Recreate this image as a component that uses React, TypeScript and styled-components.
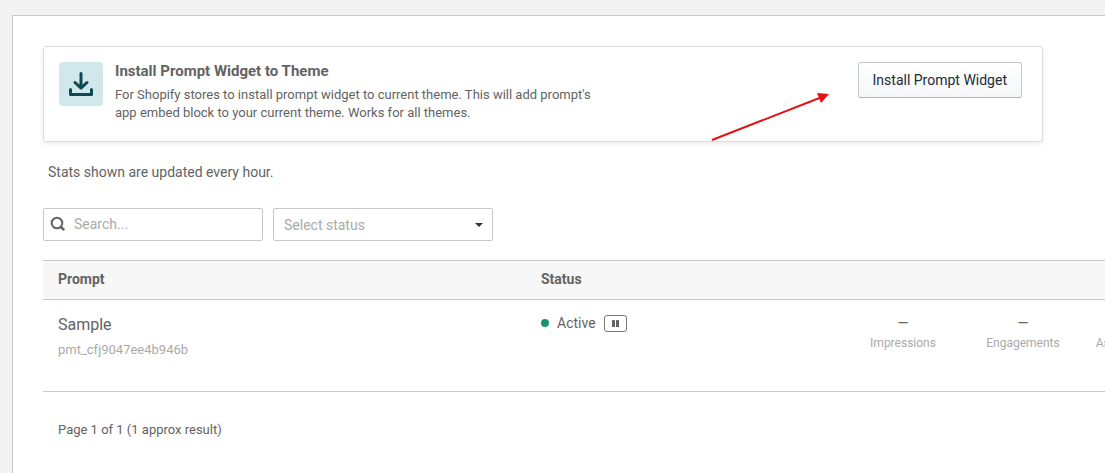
import React from "react";
import styled, { createGlobalStyle } from "styled-components";

const GlobalStyle = createGlobalStyle`
  *, *::before, *::after { box-sizing: border-box; }
  body {
    margin: 0;
    background: #f3f3f3;
    color: #636363;
    font: 14px/20px Roboto, "Liberation Sans", sans-serif;
  }
  input, select, button { font: inherit; }
`;

const Page = styled.div`
  padding: 15px 0 0 12px;
  min-height: 100vh;
  display: flex;
  overflow: hidden;
`;

const Panel = styled.main`
  flex: 1;
  min-width: 0;
  padding: 30px 0 30px 30px;
  background: #fff;
  border: solid #c8c8c8;
  border-width: 1px 0 0 1px;
`;

const InstallCard = styled.section`
  position: relative;
  display: flex;
  align-items: flex-start;
  gap: 12px;
  max-width: 1000px;
  min-height: 96px;
  padding: 15px 20px 15px 15px;
  border: 1px solid #dcdcdc;
  border-radius: 3px;
  box-shadow: 0 2px 5px rgba(0, 0, 0, 0.08);
`;

const IconTile = styled.div`
  flex: none;
  width: 44px;
  height: 44px;
  border-radius: 4px;
  background: #d0e7eb;
  svg { display: block; }
`;

const CardText = styled.div`
  flex: 1;
  min-width: 0;
`;

const CardTitle = styled.h2`
  margin: 0 0 6px;
  font-size: 15px;
  line-height: 18px;
  font-weight: 700;
`;

const CardDescription = styled.p`
  margin: 0;
  max-width: 480px;
  font-size: 13px;
  line-height: 18px;
`;

const InstallButton = styled.button`
  flex: none;
  height: 36px;
  padding: 0 14px;
  border: 1px solid #c4c8cc;
  border-bottom-color: #aeb4b9;
  border-radius: 3px;
  background: linear-gradient(to bottom, #fff, #f5f7f9);
  color: #212b36;
  white-space: nowrap;
  cursor: pointer;
`;

const Pointer = styled.svg`
  position: absolute;
  top: 45px;
  right: 212px;
  pointer-events: none;
`;

const Note = styled.p`
  margin: 20px 0 26px 5px;
`;

const Filters = styled.form`
  display: flex;
  gap: 10px;
  margin-bottom: 19px;
`;

const Field = styled.label`
  position: relative;
  display: block;
  width: 220px;
`;

const SearchInput = styled.input`
  display: block;
  width: 100%;
  height: 33px;
  padding: 0 10px 2px 30px;
  border: 1px solid #c8c8c8;
  border-radius: 2px;
  background: #fff;
  color: #636363;
  &::placeholder { color: #aaa; opacity: 1; }
`;

const StatusSelect = styled.select`
  display: block;
  width: 100%;
  height: 33px;
  padding: 0 30px 0 10px;
  border: 1px solid #c8c8c8;
  border-radius: 2px;
  background: #fff;
  color: #aaa;
  appearance: none;
`;

const SearchIcon = styled.svg`
  position: absolute;
  left: 7px;
  top: 8px;
`;

const Caret = styled.svg`
  position: absolute;
  right: 10px;
  top: 15px;
  pointer-events: none;
`;

const TableArea = styled.div`
  overflow: hidden;
`;

const Table = styled.table`
  width: 100%;
  min-width: 1160px;
  table-layout: fixed;
  border-collapse: separate;
  border-spacing: 0;
`;

const HeadCell = styled.th<{ $width?: number }>`
  width: ${(p) => (p.$width ? `${p.$width}px` : "auto")};
  height: 40px;
  padding: 0 15px 2px;
  border: solid #c8c8c8;
  border-width: 1px 0;
  background: #f7f7f7;
  text-align: left;
  font-weight: 700;
`;

const Cell = styled.td`
  height: 92px;
  padding: 14px 15px 0;
  border-bottom: 1px solid #c8c8c8;
  vertical-align: top;
`;

const MetricCell = styled(Cell)`
  padding: 14px 0 0;
  text-align: center;
`;

const PromptName = styled.div`
  margin-bottom: 4px;
  font-size: 16px;
  line-height: 22px;
`;

const PromptId = styled.div`
  color: #aaa;
  font-size: 13px;
  line-height: 20px;
`;

const StatusLine = styled.div`
  display: flex;
  align-items: center;
  gap: 8px;
  line-height: 18px;
`;

const Dot = styled.span`
  width: 8px;
  height: 8px;
  border-radius: 50%;
  background: #1a936f;
`;

const PauseButton = styled.button`
  display: grid;
  place-items: center;
  width: 23px;
  height: 17px;
  padding: 0;
  border: 1px solid #777;
  border-radius: 3px;
  background: #fff;
  cursor: pointer;
`;

const MetricValue = styled.div`
  line-height: 18px;
`;

const MetricLabel = styled.div`
  color: #aaa;
  font-size: 12px;
  line-height: 22px;
  white-space: nowrap;
`;

const Paging = styled.p`
  margin: 28px 0 0 15px;
  font-size: 13px;
  line-height: 20px;
`;

const metrics = ["Impressions", "Engagements", "Assisted Revenue"];

export default function App() {
  return (
    <>
      <GlobalStyle />
      <Page>
        <Panel>
          <InstallCard>
            <IconTile>
              <svg width="44" height="44" fill="none" stroke="#0d4b54" strokeWidth="3" strokeLinecap="round" strokeLinejoin="round" aria-hidden="true">
                <path d="M22 11.5V26M16 20.5l6 5.7 6-5.7" />
                <path d="M11.5 27.5v5h21v-5" />
              </svg>
            </IconTile>
            <CardText>
              <CardTitle>Install Prompt Widget to Theme</CardTitle>
              <CardDescription>
                For Shopify stores to install prompt widget to current theme. This will add prompt's app embed block to
                your current theme. Works for all themes.
              </CardDescription>
            </CardText>
            <InstallButton type="button">Install Prompt Widget</InstallButton>
            <Pointer width="120" height="50" aria-hidden="true">
              <path d="M2 48L112 5" stroke="#e31313" strokeWidth="2" />
              <path d="M119 2l-12-1 4 10z" fill="#e31313" />
            </Pointer>
          </InstallCard>

          <Note>Stats shown are updated every hour.</Note>

          <Filters>
            <Field>
              <SearchInput type="text" placeholder="Search..." aria-label="Search" />
              <SearchIcon width="16" height="16" fill="none" stroke="#636363" aria-hidden="true">
                <circle cx="7" cy="7" r="5.3" strokeWidth="2" />
                <path d="M10.8 10.8l3.4 3.4" strokeWidth="2.6" />
              </SearchIcon>
            </Field>
            <Field>
              <StatusSelect defaultValue="" aria-label="Status">
                <option value="">Select status</option>
              </StatusSelect>
              <Caret width="8" height="4" aria-hidden="true">
                <path d="M0 0h8L4 4z" fill="#333" />
              </Caret>
            </Field>
          </Filters>

          <TableArea>
            <Table>
              <thead>
                <tr>
                  <HeadCell>Prompt</HeadCell>
                  <HeadCell $width={317}>Status</HeadCell>
                  {metrics.map((m) => (
                    <HeadCell key={m} $width={120} />
                  ))}
                </tr>
              </thead>
              <tbody>
                <tr>
                  <Cell>
                    <PromptName>Sample</PromptName>
                    <PromptId>pmt_cfj9047ee4b946b</PromptId>
                  </Cell>
                  <Cell>
                    <StatusLine>
                      <Dot />
                      Active
                      <PauseButton type="button" aria-label="Pause">
                        <svg width="7" height="7" fill="#636363" aria-hidden="true">
                          <rect width="3" height="7" rx="0.5" />
                          <rect x="4" width="3" height="7" rx="0.5" />
                        </svg>
                      </PauseButton>
                    </StatusLine>
                  </Cell>
                  {metrics.map((m) => (
                    <MetricCell key={m}>
                      <MetricValue>—</MetricValue>
                      <MetricLabel>{m}</MetricLabel>
                    </MetricCell>
                  ))}
                </tr>
              </tbody>
            </Table>
          </TableArea>

          <Paging>Page 1 of 1 (1 approx result)</Paging>
        </Panel>
      </Page>
    </>
  );
}
